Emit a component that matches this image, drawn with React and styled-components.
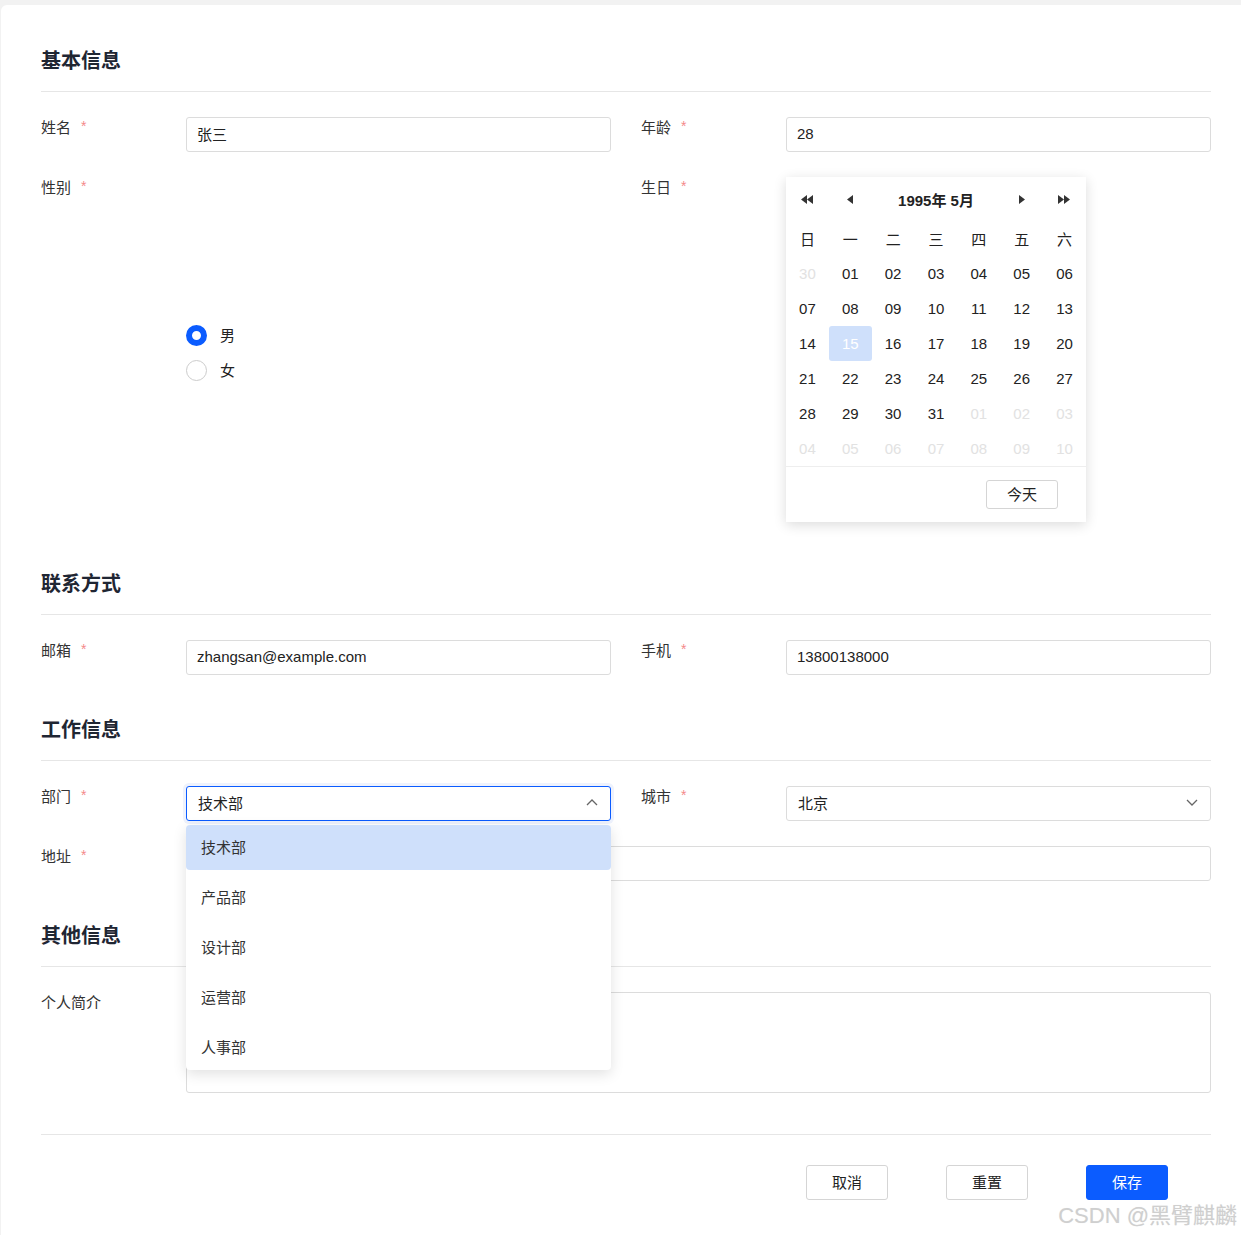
import styled, { createGlobalStyle } from 'styled-components'

const GlobalStyle = createGlobalStyle`
    html, body {
        margin: 0;
        padding: 0;
        background: #f2f2f2;
        overflow-x: hidden;
    }
    body {
        font-family: 'Liberation Sans', 'Noto Sans CJK SC', sans-serif;
        font-size: 15px;
        color: #333;
    }
`
const Page = styled.div`
    position: relative;
    padding: 5px 0 0 1px;
    min-height: 1230px;
`
const Card = styled.div`
    width: 1250px;
    box-sizing: border-box;
    background: #fff;
    border-radius: 6px 0 0 0;
    padding: 40px 40px 35px;
    min-height: 1230px;
`
const Section = styled.div`
    & + & {
        padding-top: 14px;
    }
`
const Title = styled.h2`
    margin: 0 0 25px;
    font-size: 20px;
    line-height: 32px;
    font-weight: 700;
    color: #1f2633;
    padding-bottom: 14px;
    border-bottom: 1px solid #e6e6e6;
`
const Row = styled.div`
    display: grid;
    grid-template-columns: ${p => (p.$full ? '1fr' : '1fr 1fr')};
    column-gap: 30px;
    margin-bottom: 25px;
`
const Field = styled.div`
    display: grid;
    grid-template-columns: 145px 1fr;
    align-items: stretch;
    position: relative;
`
const Label = styled.div`
    align-self: start;
    line-height: 22px;
    font-size: 15px;
    color: #333;
    white-space: nowrap;
`
const Star = styled.span`
    color: #f48a8a;
    font-size: 14px;
    margin-left: 10px;
    position: relative;
    top: -2px;
`
const Control = styled.div`
    display: flex;
    flex-direction: column;
    justify-content: ${p => (p.$top ? 'flex-start' : 'center')};
    position: relative;
`
const Input = styled.div`
    height: 35px;
    box-sizing: border-box;
    border: 1px solid #dcdcdc;
    border-radius: 3px;
    padding: 0 10px 2px;
    display: flex;
    align-items: center;
    color: #222;
    font-size: 15px;
    background: #fff;
`
const TextArea = styled(Input)`
    height: 101px;
`
const SelectBox = styled(Input)`
    justify-content: space-between;
    padding: 0 12px 2px 11px;
    border-color: ${p => (p.$open ? '#0b5cff' : '#dcdcdc')};
    box-shadow: ${p => (p.$open ? '0 0 0 3px #eef2fd' : 'none')};
`
const Menu = styled.div`
    position: absolute;
    top: 39px;
    left: 0;
    right: 0;
    background: #fff;
    border-radius: 4px;
    box-shadow: 0 4px 14px rgba(0, 0, 0, 0.12);
    z-index: 5;
    display: flex;
    flex-direction: column;
    gap: 5px;
`
const MenuItem = styled.div`
    height: 45px;
    box-sizing: border-box;
    display: flex;
    align-items: center;
    padding: 0 15px 3px;
    border-radius: 4px;
    color: #333;
    background: ${p => (p.$active ? '#cfe0fb' : 'transparent')};
`
const RadioGroup = styled.div`
    display: flex;
    flex-direction: column;
    gap: 14px;
`
const RadioItem = styled.label`
    display: flex;
    align-items: center;
    gap: 13px;
    height: 21px;
    line-height: 21px;
    color: #222;
`
const RadioDot = styled.span`
    width: 21px;
    height: 21px;
    box-sizing: border-box;
    border-radius: 50%;
    background: #fff;
    border: ${p => (p.$checked ? '6px solid #0b5cff' : '1px solid #cccccc')};
`
const Calendar = styled.div`
    width: 300px;
    background: #fff;
    box-shadow: 0 3px 12px rgba(0, 0, 0, 0.14);
    margin-bottom: 7px;
`
const CalGrid = styled.div`
    display: grid;
    grid-template-columns: repeat(7, 1fr);
`
const CalHead = styled(CalGrid)`
    height: 44px;
    align-items: center;
`
const NavBtn = styled.div`
    display: flex;
    justify-content: center;
    align-items: center;
    grid-column: ${p => p.$col};
`
const CalTitle = styled.div`
    grid-column: 3 / 6;
    text-align: center;
    font-weight: 700;
    color: #222;
`
const Cell = styled.div`
    height: 35px;
    display: flex;
    align-items: center;
    justify-content: center;
    border-radius: 3px;
    color: ${p => (p.$muted ? '#e2e2e2' : p.$selected ? '#fff' : '#222')};
    background: ${p => (p.$selected ? '#cfe0fb' : 'transparent')};
`
const CalFoot = styled.div`
    border-top: 1px solid #eee;
    padding: 13px 28px 13px 0;
    display: flex;
    justify-content: flex-end;
`
const SmallBtn = styled.div`
    width: 72px;
    height: 29px;
    box-sizing: border-box;
    border: 1px solid #d5d5d5;
    border-radius: 3px;
    padding-bottom: 2px;
    display: flex;
    align-items: center;
    justify-content: center;
    color: #222;
`
const Footer = styled.div`
    margin-top: 41px;
    border-top: 1px solid #e6e6e6;
    padding: 30px 43px 0 0;
    display: flex;
    justify-content: flex-end;
    gap: 58px;
`
const Button = styled.div`
    width: 82px;
    height: 35px;
    box-sizing: border-box;
    border-radius: 3px;
    padding-bottom: 2px;
    display: flex;
    align-items: center;
    justify-content: center;
    font-size: 15px;
    border: 1px solid ${p => (p.$primary ? '#0b5cff' : '#d5d5d5')};
    background: ${p => (p.$primary ? '#0b5cff' : '#fff')};
    color: ${p => (p.$primary ? '#fff' : '#222')};
`
const Watermark = styled.div`
    position: absolute;
    right: 4px;
    top: 1197px;
    font-size: 22px;
    color: #cfcfcf;
    text-shadow: 0 0 1px rgba(0, 0, 0, 0.08);
    pointer-events: none;
`

const Tri = ({ dir = 'left', double }) => {
    const w = double ? 13 : 6
    const one = x => (dir === 'left' ? `${x + 6},0 ${x + 6},9 ${x},4.5` : `${x},0 ${x},9 ${x + 6},4.5`)
    return (
        <svg width={w} height='9' viewBox={`0 0 ${w} 9`}>
            <polygon points={one(0)} fill='#333' />
            {double && <polygon points={one(6)} fill='#333' />}
        </svg>
    )
}

const Chevron = ({ up }) => (
    <svg width='12' height='7' viewBox='0 0 12 7'>
        <polyline
            points={up ? '1,6 6,1 11,6' : '1,1 6,6 11,1'}
            fill='none'
            stroke='#666'
            strokeWidth='1.3'
        />
    </svg>
)

const pad = n => String(n).padStart(2, '0')
const days = [
    { d: 30, m: true },
    ...Array.from({ length: 31 }, (_, i) => ({ d: i + 1 })),
    ...Array.from({ length: 10 }, (_, i) => ({ d: i + 1, m: true }))
]
const weeks = ['日', '一', '二', '三', '四', '五', '六']
const depts = ['技术部', '产品部', '设计部', '运营部', '人事部']

const Req = ({ children, required = true }) => (
    <Label>
        {children}
        {required && <Star>*</Star>}
    </Label>
)

export default function App() {
    return (
        <Page>
            <GlobalStyle />
            <Card>
                <Section>
                    <Title>基本信息</Title>
                    <Row>
                        <Field>
                            <Req>姓名</Req>
                            <Control>
                                <Input>张三</Input>
                            </Control>
                        </Field>
                        <Field>
                            <Req>年龄</Req>
                            <Control>
                                <Input>28</Input>
                            </Control>
                        </Field>
                    </Row>
                    <Row>
                        <Field>
                            <Req>性别</Req>
                            <Control>
                                <RadioGroup>
                                    <RadioItem>
                                        <RadioDot $checked />男
                                    </RadioItem>
                                    <RadioItem>
                                        <RadioDot />女
                                    </RadioItem>
                                </RadioGroup>
                            </Control>
                        </Field>
                        <Field>
                            <Req>生日</Req>
                            <Control $top>
                                <Calendar>
                                    <CalHead>
                                        <NavBtn $col={1}>
                                            <Tri double />
                                        </NavBtn>
                                        <NavBtn $col={2}>
                                            <Tri />
                                        </NavBtn>
                                        <CalTitle>1995年 5月</CalTitle>
                                        <NavBtn $col={6}>
                                            <Tri dir='right' />
                                        </NavBtn>
                                        <NavBtn $col={7}>
                                            <Tri dir='right' double />
                                        </NavBtn>
                                    </CalHead>
                                    <CalGrid>
                                        {weeks.map(w => (
                                            <Cell key={w}>{w}</Cell>
                                        ))}
                                        {days.map((x, i) => (
                                            <Cell key={i} $muted={x.m} $selected={!x.m && x.d === 15}>
                                                {pad(x.d)}
                                            </Cell>
                                        ))}
                                    </CalGrid>
                                    <CalFoot>
                                        <SmallBtn>今天</SmallBtn>
                                    </CalFoot>
                                </Calendar>
                            </Control>
                        </Field>
                    </Row>
                </Section>

                <Section>
                    <Title>联系方式</Title>
                    <Row>
                        <Field>
                            <Req>邮箱</Req>
                            <Control>
                                <Input>zhangsan@example.com</Input>
                            </Control>
                        </Field>
                        <Field>
                            <Req>手机</Req>
                            <Control>
                                <Input>13800138000</Input>
                            </Control>
                        </Field>
                    </Row>
                </Section>

                <Section>
                    <Title>工作信息</Title>
                    <Row>
                        <Field>
                            <Req>部门</Req>
                            <Control>
                                <SelectBox $open>
                                    技术部
                                    <Chevron up />
                                </SelectBox>
                                <Menu>
                                    {depts.map((d, i) => (
                                        <MenuItem key={d} $active={i === 0}>
                                            {d}
                                        </MenuItem>
                                    ))}
                                </Menu>
                            </Control>
                        </Field>
                        <Field>
                            <Req>城市</Req>
                            <Control>
                                <SelectBox>
                                    北京
                                    <Chevron />
                                </SelectBox>
                            </Control>
                        </Field>
                    </Row>
                    <Row $full>
                        <Field>
                            <Req>地址</Req>
                            <Control>
                                <Input />
                            </Control>
                        </Field>
                    </Row>
                </Section>

                <Section>
                    <Title>其他信息</Title>
                    <Row $full>
                        <Field>
                            <Req required={false}>个人简介</Req>
                            <Control $top>
                                <TextArea />
                            </Control>
                        </Field>
                    </Row>
                </Section>

                <Footer>
                    <Button>取消</Button>
                    <Button>重置</Button>
                    <Button $primary>保存</Button>
                </Footer>
            </Card>
            <Watermark>CSDN @黑臂麒麟</Watermark>
        </Page>
    )
}
